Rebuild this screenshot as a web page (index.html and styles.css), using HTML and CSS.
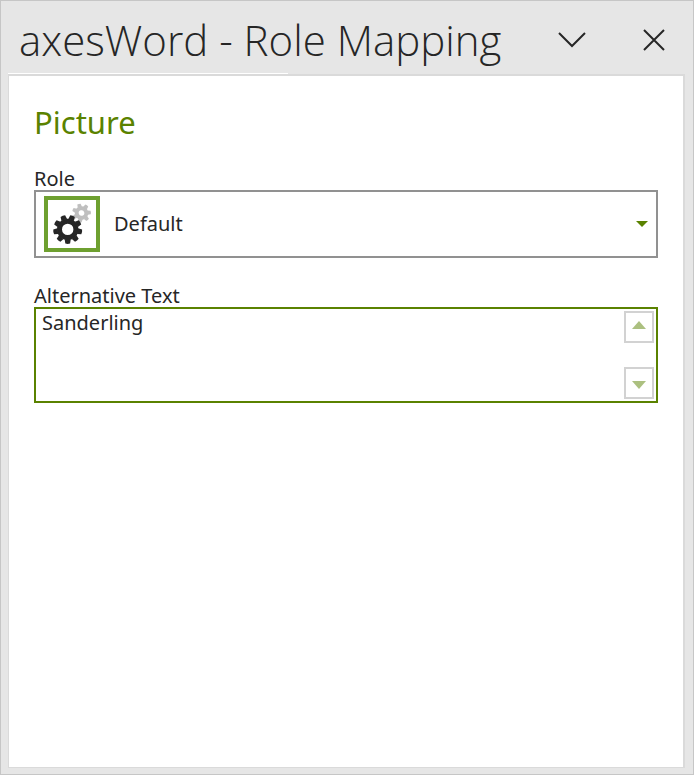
FILE: index.html
```html
<!DOCTYPE html>
<html lang="en">
<head>
    <meta charset="UTF-8">
    <meta name="viewport" content="width=device-width, initial-scale=1.0">
    <title>axesWord - Role Mapping</title>
    <link rel="stylesheet" href="styles.css">
</head>
<body>
    <header class="titlebar">
        <h1>axesWord - Role Mapping</h1>
        <button type="button" class="icon-button" aria-label="Task pane options">
            <svg width="28" height="16" viewBox="0 0 28 16"><path d="M1 1L14 14L27 1"/></svg>
        </button>
        <button type="button" class="icon-button" aria-label="Close">
            <svg width="22" height="22" viewBox="0 0 22 22"><path d="M1 1L21 21M21 1L1 21"/></svg>
        </button>
    </header>
    <div class="highlight"></div>
    <main class="pane">
        <h2>Picture</h2>
        <form>
            <div class="field">
                <label for="role">Role</label>
                <div class="role-box">
                    <svg class="role-icon" width="56" height="56" viewBox="0 0 56 56">
                        <defs>
                            <path id="tooth" d="M-3 -10L-2.4 -14.2Q0 -15 2.4 -14.2L3 -10Z"/>
                            <path id="small-tooth" d="M-2.2 -6L-1.7 -9.2Q0 -9.7 1.7 -9.2L2.2 -6Z"/>
                        </defs>
                        <rect class="frame" x="2" y="2" width="52" height="52"/>
                        <g class="gear-back" transform="translate(37.5 17) rotate(-16)">
                            <circle r="4.8"/>
                            <use href="#small-tooth"/>
                            <use href="#small-tooth" transform="rotate(51.4)"/>
                            <use href="#small-tooth" transform="rotate(102.8)"/>
                            <use href="#small-tooth" transform="rotate(154.2)"/>
                            <use href="#small-tooth" transform="rotate(205.7)"/>
                            <use href="#small-tooth" transform="rotate(257.1)"/>
                            <use href="#small-tooth" transform="rotate(308.5)"/>
                        </g>
                        <g class="gear-front" transform="translate(23.7 33.4) rotate(180)">
                            <circle r="8.2"/>
                            <use href="#tooth"/>
                            <use href="#tooth" transform="rotate(40)"/>
                            <use href="#tooth" transform="rotate(80)"/>
                            <use href="#tooth" transform="rotate(120)"/>
                            <use href="#tooth" transform="rotate(160)"/>
                            <use href="#tooth" transform="rotate(200)"/>
                            <use href="#tooth" transform="rotate(240)"/>
                            <use href="#tooth" transform="rotate(280)"/>
                            <use href="#tooth" transform="rotate(320)"/>
                        </g>
                    </svg>
                    <select id="role">
                        <option>Default</option>
                    </select>
                    <svg class="arrow" width="12" height="6" viewBox="0 0 12 6"><path d="M0 0H12L6 6Z"/></svg>
                </div>
            </div>
            <div class="field">
                <label for="altText">Alternative Text</label>
                <div class="alt-box">
                    <textarea id="altText">Sanderling</textarea>
                    <div class="scroll">
                        <button type="button" class="up" aria-label="Scroll up">
                            <svg width="14" height="8" viewBox="0 0 14 8"><path d="M0 8H14L7 0Z"/></svg>
                        </button>
                        <button type="button" class="down" aria-label="Scroll down">
                            <svg width="14" height="8" viewBox="0 0 14 8"><path d="M0 0H14L7 8Z"/></svg>
                        </button>
                    </div>
                </div>
            </div>
        </form>
    </main>
</body>
</html>
```
FILE: styles.css
```css
*{
    box-sizing: border-box;
    padding: 0px;
    margin: 0px;
}

body{
    display: flex;
    flex-direction: column;
    min-height: 100vh;
    padding: 0px 8px 6px 7px;
    border: solid #c6c6c6 1px;
    background-color: #e6e6e6;
    color: #262626;
    font-family: "Noto Sans", "Segoe UI", sans-serif;
    font-size: 20px;
    line-height: 24px;
}

button{
    border: none;
    background: none;
    cursor: pointer;
}

svg{
    display: block;
}

.titlebar{
    display: flex;
    align-items: center;
    height: 72px;
    padding: 5px 9px 0px 11px;
}

.titlebar h1{
    flex: 1;
    font-family: "Open Sans", "Segoe UI", sans-serif;
    font-size: 42px;
    font-weight: 300;
    line-height: 56px;
    white-space: nowrap;
}

.icon-button{
    display: flex;
    align-items: center;
    justify-content: center;
    width: 44px;
    height: 44px;
}

.icon-button + .icon-button{
    margin-left: 38px;
}

.icon-button path{
    fill: none;
    stroke: #262626;
    stroke-width: 2;
}

.highlight{
    width: 280px;
    height: 1px;
    background-color: white;
}

.pane{
    flex: 1;
    padding: 28px 25px;
    border: solid #dadada;
    border-width: 2px 2px 1px 1px;
    background-color: white;
}

.pane h2{
    margin-bottom: 28px;
    color: #5a8200;
    font-size: 31px;
    font-weight: 400;
    line-height: 36px;
}

.field{
    display: flex;
    flex-direction: column;
    margin-bottom: 27px;
}

label{
    line-height: 22px;
}

.role-box{
    display: flex;
    align-items: center;
    height: 68px;
    padding: 4px 8px;
    border: solid #919191 2px;
}

.role-icon .frame{
    fill: white;
    stroke: #6ea030;
    stroke-width: 4;
}

.gear-back{
    fill: #bfbfbf;
}

.gear-front{
    fill: #262626;
}

.gear-back circle{
    fill: none;
    stroke: #bfbfbf;
    stroke-width: 4;
}

.gear-front circle{
    fill: none;
    stroke: #262626;
    stroke-width: 5;
}

select{
    flex: 1;
    height: 56px;
    padding-left: 14px;
    border: none;
    outline: none;
    appearance: none;
    background: none;
    color: inherit;
    font: inherit;
}

.arrow{
    fill: #5a8200;
}

.alt-box{
    display: flex;
    height: 96px;
    padding: 2px;
    border: solid #5a8200 2px;
}

textarea{
    flex: 1;
    padding-left: 4px;
    border: none;
    outline: none;
    resize: none;
    overflow: hidden;
    background: none;
    color: inherit;
    font: inherit;
}

.scroll{
    display: flex;
    flex-direction: column;
    justify-content: space-between;
}

.scroll button{
    display: flex;
    align-items: center;
    justify-content: center;
    width: 30px;
    height: 32px;
    border: solid #d2d2d2 2px;
}

.scroll .up{
    padding-bottom: 4px;
}

.scroll .down{
    padding-top: 4px;
}

.scroll svg{
    fill: #acc080;
}
```
